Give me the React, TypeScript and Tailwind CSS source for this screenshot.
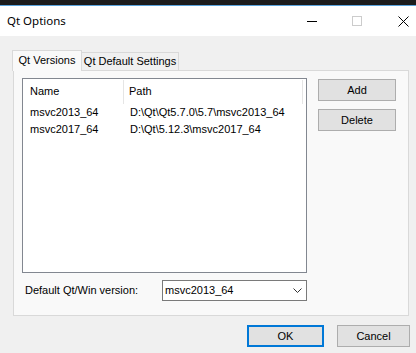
import React from "react";

const sans = { fontFamily: '"Liberation Sans", Arial, sans-serif' };

export default function App() {
  return (
    <div
      className="w-[416px] h-[353px] bg-[#f0f0f0] flex flex-col overflow-hidden text-[11px] text-black"
      style={sans}
    >
      <div className="h-[5px] bg-[#1c1c1c] shrink-0" />
      <div className="h-[1px] bg-[#5aa3dc] shrink-0" />
      {/* title bar */}
      <div className="h-[30px] bg-white flex items-center shrink-0 relative">
        <span
          className="ml-[7px] text-[11.5px] text-black"
          style={{ fontFamily: '"Noto Sans", "Open Sans", sans-serif' }}
        >
          Qt Options
        </span>
        <div className="flex-1" />
        <svg width="11" height="11" viewBox="0 0 11 11" className="mr-[34px]">
          <line x1="0" y1="5.5" x2="10" y2="5.5" stroke="#000" strokeWidth="1" />
        </svg>
        <svg width="11" height="11" viewBox="0 0 11 11" className="mr-[35px]">
          <rect x="0.5" y="0.5" width="9" height="9" fill="none" stroke="#cccccc" strokeWidth="1" />
        </svg>
        <svg width="11" height="11" viewBox="0 0 11 11" className="mr-[7px]">
          <path d="M0.5 0.5 L10.5 10.5 M10.5 0.5 L0.5 10.5" stroke="#000" strokeWidth="1" />
        </svg>
      </div>

      {/* body */}
      <div className="flex flex-col pl-[12px] pt-[14px]">
        {/* tabs */}
        <div className="flex h-[20px] items-end relative z-10">
          <div className="w-[70px] h-[21px] -mb-[1px] bg-[#f9f9f9] border border-b-0 border-[#d9d9d9] flex items-center justify-center pb-[2px]">
            Qt Versions
          </div>
          <div className="w-[97px] h-[18px] bg-[#f0f0f0] border border-l-0 border-b-0 border-[#d9d9d9] flex items-center justify-center">
            Qt Default Settings
          </div>
        </div>
        {/* pane */}
        <div className="ml-[1px] w-[396px] h-[246px] border border-[#d9d9d9] bg-[#f9f9f9] flex pl-[8px] pt-[7px]">
          <div className="flex flex-col w-[285px]">
            <div className="h-[195px] border border-[#828790] bg-white flex flex-col">
              <div className="h-[24px] flex items-center relative">
                <div className="w-[101px] h-full flex items-center pl-[7px] border-r border-[#e5e5e5] mt-[1px]">Name</div>
                <div className="w-[179px] h-full flex items-center pl-[5px] border-r border-[#e5e5e5] mt-[1px]">Path</div>
              </div>
              <div className="flex items-center h-[17px] mt-[1px]">
                <div className="w-[101px] pl-[7px]">msvc2013_64</div>
                <div className="pl-[6px]">D:\Qt\Qt5.7.0\5.7\msvc2013_64</div>
              </div>
              <div className="flex items-center h-[17px]">
                <div className="w-[101px] pl-[7px]">msvc2017_64</div>
                <div className="pl-[6px]">D:\Qt\5.12.3\msvc2017_64</div>
              </div>
            </div>
            <div className="flex items-center mt-[7px]">
              <span className="ml-[3px] w-[137px]">Default Qt/Win version:</span>
              <div className="w-[145px] h-[21px] border border-[#7a7a7a] bg-white flex items-center pl-[2px] pr-[4px]">
                <span className="flex-1">msvc2013_64</span>
                <svg width="9" height="6" viewBox="0 0 9 6">
                  <path d="M0.5 0.5 L4.5 4.5 L8.5 0.5" fill="none" stroke="#333" strokeWidth="1" />
                </svg>
              </div>
            </div>
          </div>
          <div className="flex flex-col ml-[11px] mt-[1px] gap-[8px]">
            <div className="w-[78px] h-[22px] bg-[#e1e1e1] border border-[#adadad] flex items-center justify-center">Add</div>
            <div className="w-[78px] h-[22px] bg-[#e1e1e1] border border-[#adadad] flex items-center justify-center">Delete</div>
          </div>
        </div>
        {/* bottom buttons */}
        <div className="flex mt-[9px] ml-[235px]">
          <div className="w-[77px] h-[22px] bg-[#e1e1e1] border-2 border-[#0078d7] flex items-center justify-center">OK</div>
          <div className="w-[73px] h-[22px] ml-[13px] bg-[#e1e1e1] border border-[#adadad] flex items-center justify-center">Cancel</div>
        </div>
      </div>
    </div>
  );
}
